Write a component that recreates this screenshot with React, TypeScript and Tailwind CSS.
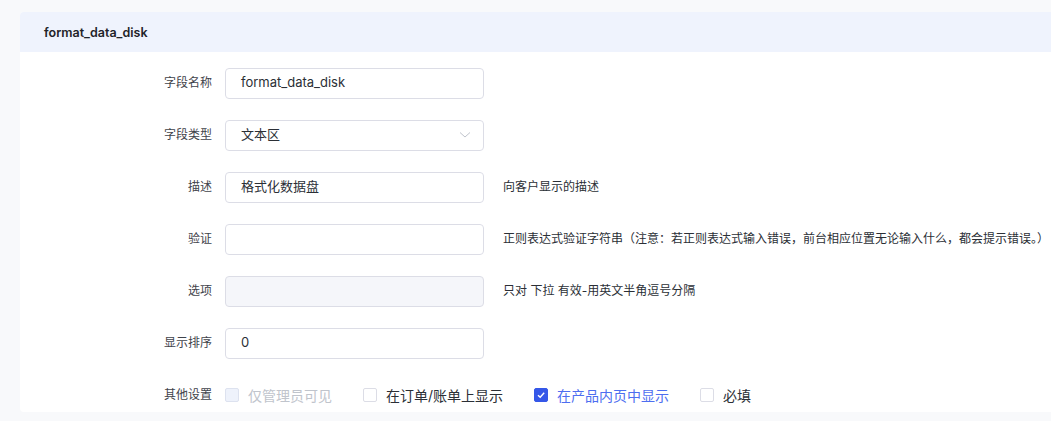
import React from "react";

const font = { fontFamily: 'Inter, "Noto Sans CJK SC", sans-serif' };

function Row({ label, children, help }: { label: string; children: React.ReactNode; help?: string }) {
  return (
    <div className="flex items-center h-[30px]">
      <div className="w-[205px] shrink-0 text-right text-[12px] text-[#3f434b] pr-[13px]">{label}</div>
      {children}
      {help && <div className="ml-[19px] text-[12px] text-[#2b2f36] whitespace-nowrap">{help}</div>}
    </div>
  );
}

function Input({ value, disabled }: { value?: string; disabled?: boolean }) {
  return (
    <div
      className={`w-[259px] h-[31px] shrink-0 rounded-[4px] border border-[#dcdde6] flex items-center pl-[15px] text-[13px] text-[#2b2f36] ${
        disabled ? "bg-[#f5f6fa]" : "bg-white"
      }`}
    >
      {value}
    </div>
  );
}

function Check({ label, state }: { label: string; state: "disabled" | "off" | "on" }) {
  const box =
    state === "disabled"
      ? "bg-[#eef2fb] border-[#dde2ef]"
      : state === "on"
      ? "bg-[#3557e8] border-[#3557e8]"
      : "bg-white border-[#dcdde6]";
  const text =
    state === "disabled" ? "text-[#c0c4cc]" : state === "on" ? "text-[#4d6ef0]" : "text-[#2b2f36]";
  return (
    <div className="flex items-center mr-[31px]">
      <div className={`w-[14px] h-[14px] rounded-[2px] border flex items-center justify-center ${box}`}>
        {state === "on" && (
          <svg width="10" height="10" viewBox="0 0 10 10">
            <path d="M2 5.2 L4.2 7.3 L8.2 2.8" fill="none" stroke="white" strokeWidth="1.4" />
          </svg>
        )}
      </div>
      <span className={`ml-[9px] text-[14px] ${text}`}>{label}</span>
    </div>
  );
}

export default function App() {
  return (
    <div className="w-[1051px] h-[421px] overflow-hidden bg-[#f8f9fb] pt-[12px] pl-[20px]" style={font}>
      <div className="w-[1060px] h-[400px] bg-white rounded-[4px] overflow-hidden">
        <div className="h-[40px] bg-[#eff3fd] flex items-center pl-[24px] pt-[2px] text-[12.5px] font-semibold text-[#1f2329]">
          format_data_disk
        </div>
        <div className="pt-[16px] flex flex-col gap-[22px]">
          <Row label="字段名称">
            <Input value="format_data_disk" />
          </Row>
          <Row label="字段类型">
            <div className="w-[259px] h-[31px] shrink-0 rounded-[4px] border border-[#dcdde6] bg-white flex items-center pl-[15px] pr-[12px] text-[13px] text-[#2b2f36] justify-between">
              <span>文本区</span>
              <svg width="12" height="8" viewBox="0 0 12 8">
                <path d="M1 1.5 L6 6 L11 1.5" fill="none" stroke="#c0c4cc" strokeWidth="1" />
              </svg>
            </div>
          </Row>
          <Row label="描述" help="向客户显示的描述">
            <Input value="格式化数据盘" />
          </Row>
          <Row label="验证" help="正则表达式验证字符串（注意：若正则表达式输入错误，前台相应位置无论输入什么，都会提示错误。）">
            <Input />
          </Row>
          <Row label="选项" help="只对 下拉 有效-用英文半角逗号分隔">
            <Input disabled />
          </Row>
          <Row label="显示排序">
            <Input value="0" />
          </Row>
          <div className="flex items-center h-[30px]">
            <div className="w-[205px] shrink-0 text-right text-[12px] text-[#3f434b] pr-[13px]">其他设置</div>
            <Check label="仅管理员可见" state="disabled" />
            <Check label="在订单/账单上显示" state="off" />
            <Check label="在产品内页中显示" state="on" />
            <Check label="必填" state="off" />
          </div>
        </div>
      </div>
    </div>
  );
}
